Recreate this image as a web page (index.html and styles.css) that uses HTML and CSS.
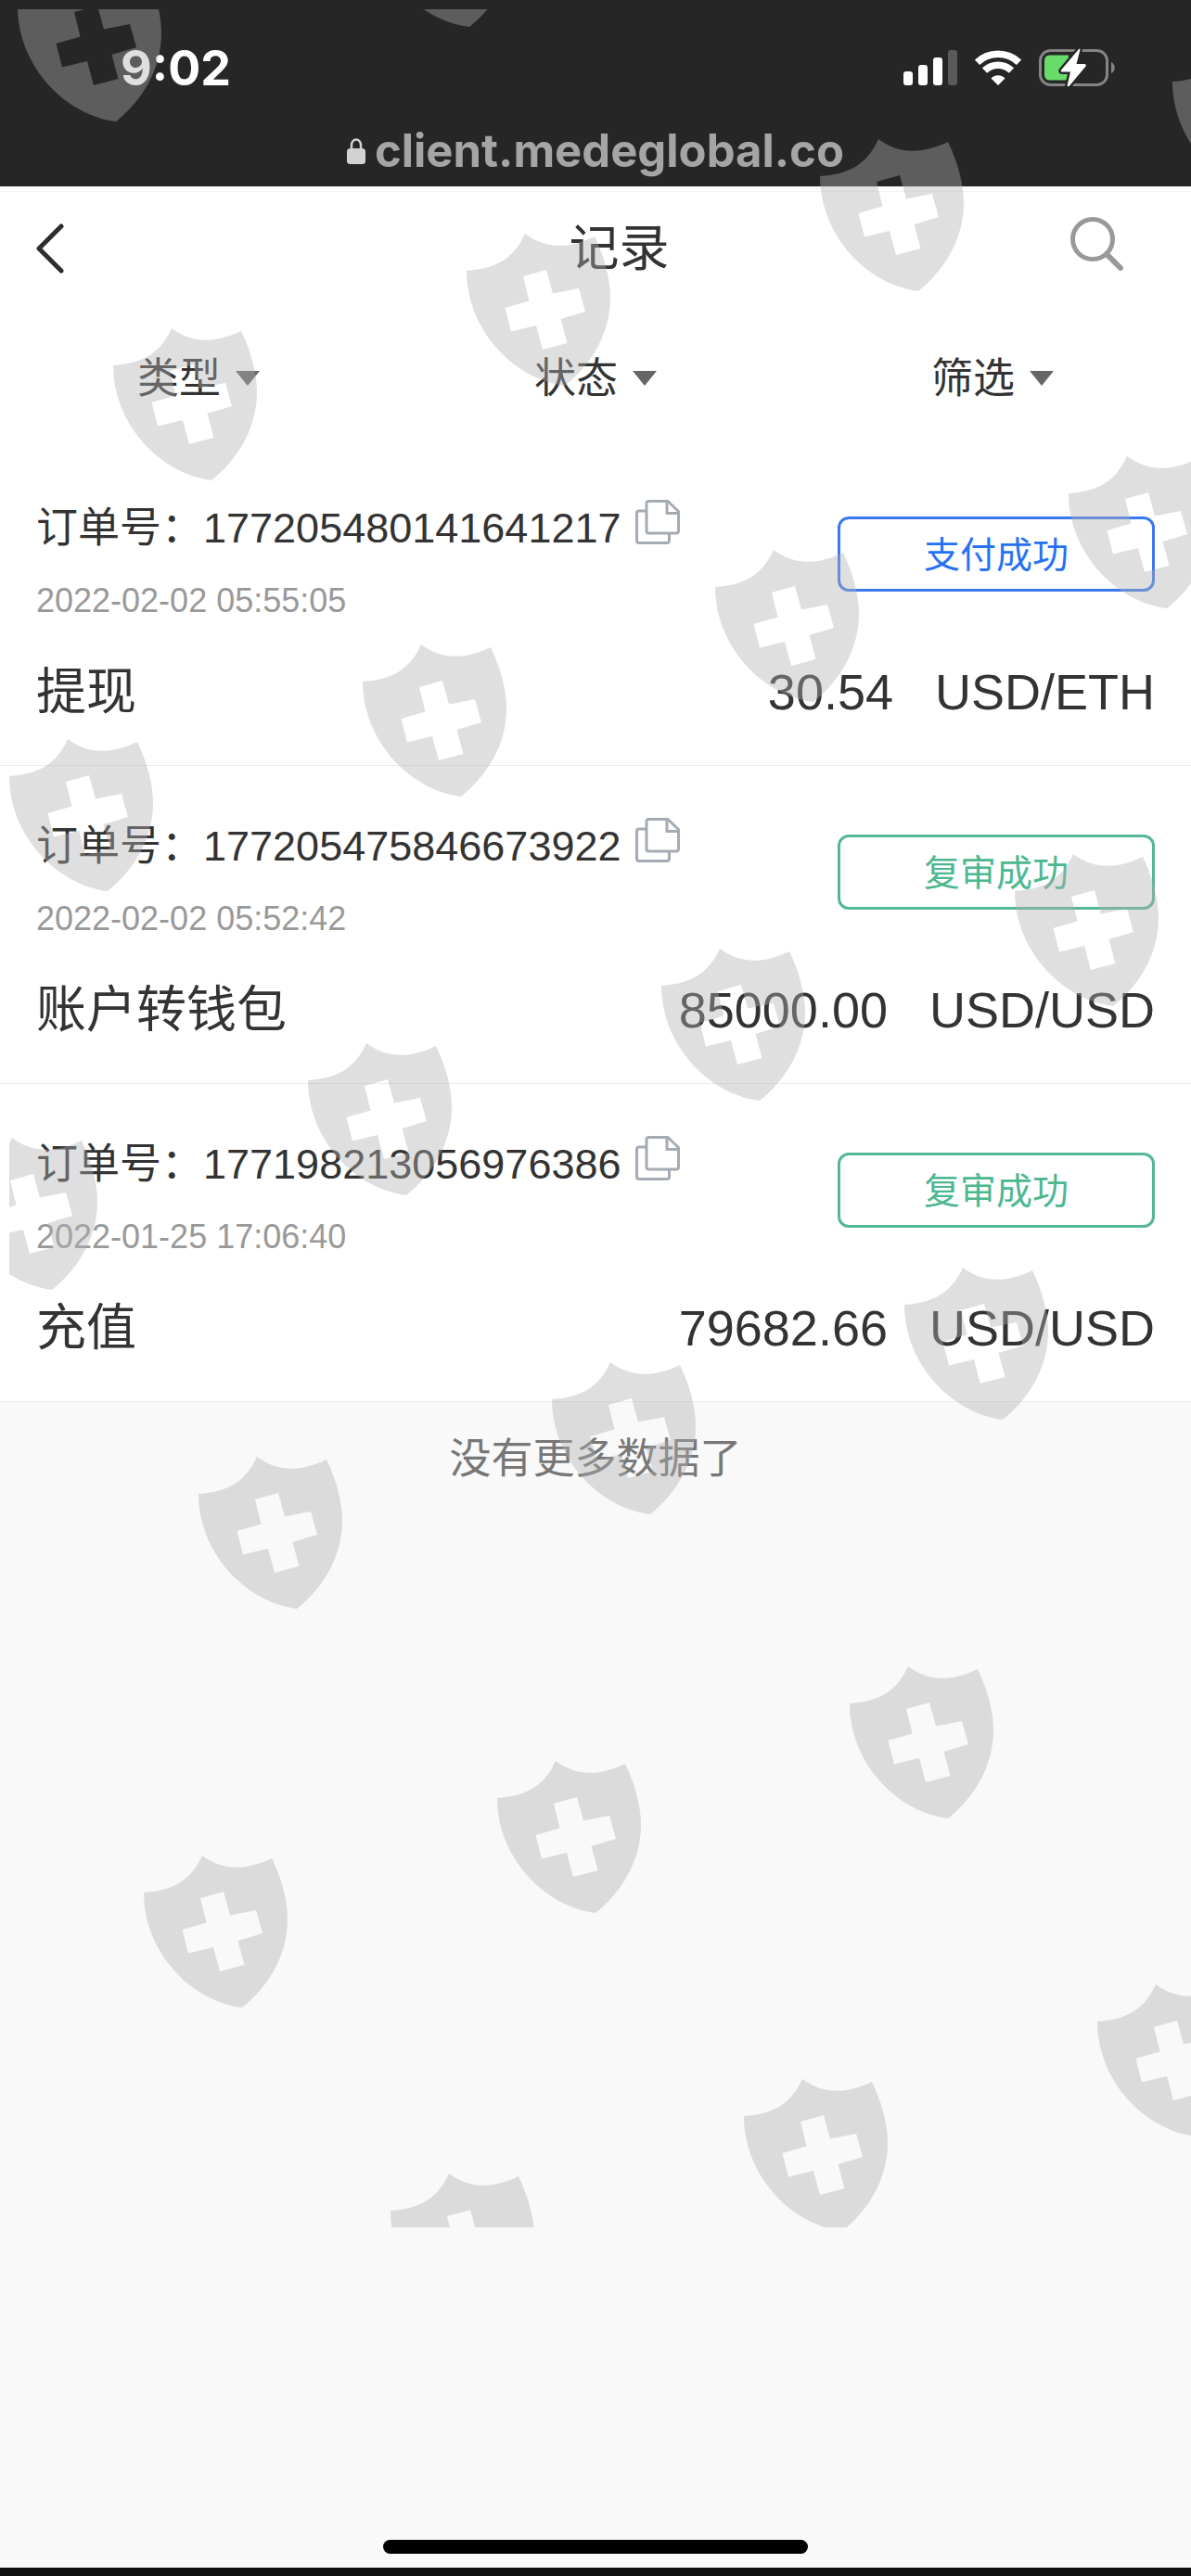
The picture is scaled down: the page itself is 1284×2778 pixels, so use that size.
FILE: index.html
```html
<!DOCTYPE html>
<html lang="zh-CN">
<head>
<meta charset="utf-8">
<meta name="viewport" content="width=device-width, initial-scale=1">
<title>记录</title>
<link rel="stylesheet" href="styles.css">
</head>
<body>
<div class="page">
  <header class="browser">
    <div class="status">
      <time class="status-time">9:02</time>
      <div class="status-icons">
        <svg width="58" height="38" viewBox="0 0 58 38" fill="#fff" aria-hidden="true">
          <rect x="0" y="23" width="10" height="15" rx="3"/>
          <rect x="16" y="16" width="10" height="22" rx="3"/>
          <rect x="32" y="8" width="10" height="30" rx="3"/>
          <rect x="48" y="0" width="10" height="38" rx="3" fill="#5a5a5a"/>
        </svg>
        <svg width="52" height="38" viewBox="0 0 52 38" fill="none" aria-hidden="true">
          <path d="M3.500 13.200C16 1.200 36 1.200 48.500 13.200" stroke="#fff" stroke-width="7.500"/>
          <path d="M11.500 22C19.500 14.200 32.500 14.200 40.500 22" stroke="#fff" stroke-width="7.500"/>
          <path d="M18.500 30.500C22.700 26.300 29.300 26.300 33.500 30.500L26 38Z" fill="#fff"/>
        </svg>
        <svg width="82" height="42" viewBox="0 0 82 42" fill="none" aria-hidden="true">
          <rect x="1.500" y="2.500" width="72" height="37" rx="11" stroke="#858585" stroke-width="3"/>
          <path d="M78 15c5 2 5 10 0 12z" fill="#858585"/>
          <path d="M12 7.500H32V34.500H12Q6 34.500 6 28.500V13.500Q6 7.500 12 7.500Z" fill="#67dc6b"/>
          <path d="M43 1L24 23.500Q23 25.500 25.500 25.500H34L30.500 40.500Q31 42 33 40.500L50.500 19.500Q51.500 17 49 17H40.500L44.500 1.500Q44 0 43 1Z" fill="#fff" stroke="#262626" stroke-width="5" paint-order="stroke" stroke-linejoin="round"/>
        </svg>
      </div>
    </div>
    <div class="address">
      <svg width="20" height="28" viewBox="0 0 20 28" aria-hidden="true">
        <path d="M5 13V7.500a5 6 0 0 1 10 0V13" fill="none" stroke="#d2d2d2" stroke-width="2.500"/>
        <rect x="0" y="11" width="20" height="17" rx="3.500" fill="#d2d2d2"/>
      </svg>
      <span>client.medeglobal.co</span>
    </div>
  </header>

  <main>
    <div class="titlebar">
      <button class="back" type="button" aria-label="返回">
        <svg width="32" height="54" viewBox="0 0 32 54" fill="none" stroke="#2d2d2d" stroke-width="5" stroke-linecap="round" stroke-linejoin="round"><path d="M27 3L3 27L27 51"/></svg>
      </button>
      <h1>记录</h1>
      <button class="search" type="button" aria-label="搜索">
        <svg width="60" height="60" viewBox="0 0 60 60" fill="none" stroke="#999" stroke-width="5" stroke-linecap="round"><circle cx="26" cy="25" r="21.500"/><path d="M41 41L56 56" stroke-width="6"/></svg>
      </button>
    </div>

    <nav class="filters" aria-label="筛选">
      <button type="button">类型<span class="caret"></span></button>
      <button type="button">状态<span class="caret"></span></button>
      <button type="button">筛选<span class="caret"></span></button>
    </nav>

    <svg class="defs" width="0" height="0" aria-hidden="true">
      <symbol id="copy" viewBox="0 0 48 48">
        <g fill="none" stroke="#a5abb5" stroke-width="3" stroke-linejoin="round">
          <path d="M12 12H4Q1.500 12 1.500 14.500V44Q1.500 46.500 4 46.500H34Q36.500 46.500 36.500 44V37"/>
          <path d="M14.500 1.500H35L46.500 12.500V33.500Q46.500 36 44 36H14.500Q12 36 12 33.500V4Q12 1.500 14.500 1.500Z"/>
          <path d="M34 2V14.500H46"/>
        </g>
      </symbol>
    </svg>

    <ul class="orders">
      <li class="order">
        <div class="order-top">
          <div class="order-info">
            <div class="order-number"><span>订单号：177205480141641217</span><button type="button" aria-label="复制"><svg width="48" height="48"><use href="#copy"/></svg></button></div>
            <time class="order-date">2022-02-02 05:55:05</time>
          </div>
          <span class="badge badge-paid">支付成功</span>
        </div>
        <div class="order-bottom">
          <span>提现</span>
          <span class="amount"><span>30.54</span><span>USD/ETH</span></span>
        </div>
      </li>
      <li class="order">
        <div class="order-top">
          <div class="order-info">
            <div class="order-number"><span>订单号：177205475846673922</span><button type="button" aria-label="复制"><svg width="48" height="48"><use href="#copy"/></svg></button></div>
            <time class="order-date">2022-02-02 05:52:42</time>
          </div>
          <span class="badge badge-reviewed">复审成功</span>
        </div>
        <div class="order-bottom">
          <span>账户转钱包</span>
          <span class="amount"><span>85000.00</span><span>USD/USD</span></span>
        </div>
      </li>
      <li class="order">
        <div class="order-top">
          <div class="order-info">
            <div class="order-number"><span>订单号：177198213056976386</span><button type="button" aria-label="复制"><svg width="48" height="48"><use href="#copy"/></svg></button></div>
            <time class="order-date">2022-01-25 17:06:40</time>
          </div>
          <span class="badge badge-reviewed">复审成功</span>
        </div>
        <div class="order-bottom">
          <span>充值</span>
          <span class="amount"><span>79682.66</span><span>USD/USD</span></span>
        </div>
      </li>
    </ul>
    <p class="end">没有更多数据了</p>
  </main>

  <footer class="home"><span class="home-bar"></span></footer>

  <svg class="watermark" aria-hidden="true">
    <defs>
      <path id="shield" fill-rule="evenodd" d="M0 0C29 -2 50 -11 63 -40C84 -24 109 -23 138 -37C149 -14 155 9 155 29C155 66 136 100 106 124C50 117 0 63 0 0ZM61 6L86 -1L93 24.500L121 19L128 44L101.500 52L108.500 78L82 85L75 59L48 65.500L41.500 40L67.500 32.500Z"/>
    </defs>
    <g transform="translate(-10 -10)">
      <use href="#shield" x="19" y="7"/>
      <use href="#shield" x="400" y="-95"/>
      <use href="#shield" x="122" y="394"/>
      <use href="#shield" x="503" y="292"/>
      <use href="#shield" x="884" y="190"/>
      <use href="#shield" x="1264" y="88"/>
      <use href="#shield" x="10" y="837"/>
      <use href="#shield" x="391" y="735"/>
      <use href="#shield" x="771" y="633"/>
      <use href="#shield" x="1152" y="532"/>
      <use href="#shield" x="-50" y="1267"/>
      <use href="#shield" x="332" y="1165"/>
      <use href="#shield" x="713" y="1063"/>
      <use href="#shield" x="1094" y="961"/>
      <use href="#shield" x="214" y="1611"/>
      <use href="#shield" x="595" y="1509"/>
      <use href="#shield" x="975" y="1407"/>
      <use href="#shield" x="155" y="2041"/>
      <use href="#shield" x="536" y="1939"/>
      <use href="#shield" x="916" y="1837"/>
      <use href="#shield" x="421" y="2384"/>
      <use href="#shield" x="802" y="2282"/>
      <use href="#shield" x="1183" y="2180"/>
    </g>
  </svg>
</div>
</body>
</html>
```

FILE: styles.css
```css
* {
  box-sizing: border-box;
}

body {
  margin: 0;
  background: #f9f9f9;
  color: #333;
  font-family: "Liberation Sans", "Noto Sans CJK SC", sans-serif;
  font-size: 45px;
}

button {
  padding: 0;
  border: 0;
  background: none;
  color: inherit;
  font: inherit;
  cursor: pointer;
}

svg {
  display: block;
}

.page {
  position: relative;
  display: flex;
  flex-direction: column;
  min-height: 100vh;
  overflow: hidden;
}

/* Browser chrome */
.browser {
  background: #262626;
  font-family: Inter, "Liberation Sans", sans-serif;
  font-weight: 700;
}

.status {
  display: flex;
  align-items: center;
  justify-content: space-between;
  height: 124px;
  padding: 22px 82px 0 130px;
}

.status-time {
  color: #fff;
  font-size: 52px;
}

.status-icons {
  display: flex;
  align-items: center;
  gap: 18px;
}

.address {
  display: flex;
  align-items: center;
  justify-content: center;
  gap: 10px;
  height: 77px;
  color: #a5a5a5;
  font-size: 49px;
}

/* Title bar */
main {
  border-top: 5px solid #fff;
}

.titlebar {
  display: grid;
  grid-template-columns: 144px 1fr 60px;
  align-items: center;
  height: 123px;
  padding: 0 72px 0 39px;
  border-top: 1px solid #f4f4f4;
  background: #fff;
}

h1 {
  margin: 0;
  font-size: 54px;
  font-weight: 400;
  line-height: 64px;
  text-align: center;
}

.search {
  padding-bottom: 10px;
}

.filters {
  display: grid;
  grid-template-columns: repeat(3, 1fr);
  height: 154px;
  padding-bottom: 3px;
  background: #fff;
}

.filters button {
  display: flex;
  align-items: center;
  justify-content: center;
  gap: 16px;
}

.caret {
  margin-top: 6px;
  border: 13px solid transparent;
  border-top: 16px solid #666;
  border-bottom: 0;
}

/* Orders */
.defs {
  position: absolute;
}

.orders {
  margin: 0;
  padding: 0;
  list-style: none;
}

.order {
  padding: 56px 39px 47px;
  border-bottom: 1px solid #ebebeb;
  background: #fff;
}

.order-top {
  display: flex;
  align-items: flex-start;
  justify-content: space-between;
}

.order-info {
  display: grid;
  gap: 25px;
}

.order-number {
  display: flex;
  align-items: flex-start;
  gap: 16px;
  line-height: 62px;
}

.order-date {
  color: #999;
  font-size: 36px;
  line-height: 44px;
}

.badge {
  width: 342px;
  margin-top: 18px;
  padding-top: 3px;
  border: 3px solid;
  border-radius: 12px;
  font-size: 39px;
  line-height: 72px;
  text-align: center;
}

.badge-paid {
  border-color: #3b78f0;
  color: #2672f3;
}

.badge-reviewed {
  border-color: #54b893;
  color: #4db890;
}

.order-bottom {
  display: flex;
  justify-content: space-between;
  margin-top: 44px;
  font-size: 54px;
  line-height: 64px;
}

.amount {
  display: flex;
  gap: 45px;
}

.end {
  margin: 30px 0 0;
  color: #777;
  line-height: 64px;
  text-align: center;
}

/* Home indicator */
.home {
  display: flex;
  justify-content: center;
  margin-top: auto;
  padding: 40px 0 15px;
  border-bottom: 9px solid #111;
}

.home-bar {
  width: 458px;
  height: 15px;
  border-radius: 8px;
  background: #000;
}

/* Shield pattern laid over the whole screen */
.watermark {
  position: absolute;
  top: 10px;
  left: 10px;
  width: 100%;
  height: 2392px;
  fill: #b0b0b0;
  opacity: 0.4;
  pointer-events: none;
}
```
